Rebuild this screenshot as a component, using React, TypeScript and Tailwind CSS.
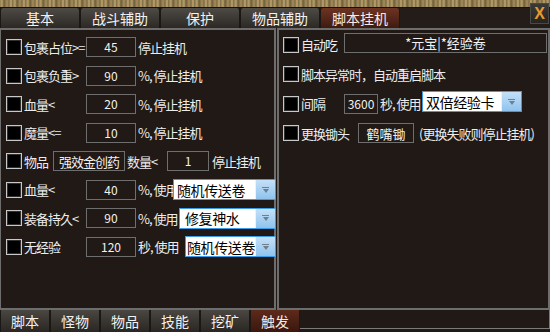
const font = "font-['Noto_Sans_CJK_SC','Liberation_Sans',sans-serif]";

function Check() {
  return <span className="block h-[16px] w-[16px] shrink-0 border border-[#c8c8c8] bg-black shadow-[inset_0_0_0_1px_#303030]" />;
}

function Box({ children, className = "" }: { children: React.ReactNode; className?: string }) {
  return (
    <span
      className={`flex h-[20px] shrink-0 items-center justify-center border border-[#6e6e6e] text-[12px] text-[#f2f2f2] ${className}`}
    >
      {children}
    </span>
  );
}

function Select({ value, className = "", pad = "pl-[3px]" }: { value: string; className?: string; pad?: string }) {
  return (
    <span className={`flex h-[21px] min-w-0 shrink-0 border border-[#3c9be6] bg-white ${className}`}>
      <span className={`flex min-w-0 flex-1 items-center overflow-hidden whitespace-nowrap text-[14px] leading-none tracking-[-0.4px] text-black ${pad}`}>
        {value}
      </span>
      <span className="flex w-[20px] shrink-0 flex-col items-center justify-center gap-[1px] border-l border-[#e8f3fc] bg-[linear-gradient(180deg,#c4e0f8,#8fc3ee)]">
        <span className="block h-[1px] w-[7px] bg-[#6f7f8c]" />
        <span className="block h-0 w-0 border-x-[3.5px] border-t-[4px] border-x-transparent border-t-[#6f7f8c]" />
      </span>
    </span>
  );
}

function Label({ children, className = "" }: { children: React.ReactNode; className?: string }) {
  return (
    <span className={`shrink-0 whitespace-pre text-[13px] leading-none tracking-[-1px] text-[#ececec] ${className}`}>{children}</span>
  );
}

function Row({ children }: { children: React.ReactNode }) {
  return <div className="flex h-[28.5px] items-center pl-[5px]">{children}</div>;
}

const topTabs = ["基本", "战斗辅助", "保护", "物品辅助", "脚本挂机"];
const bottomTabs = ["脚本", "怪物", "物品", "技能", "挖矿", "触发"];

export default function App() {
  return (
    <div className={`relative flex h-[332px] w-[550px] flex-col overflow-hidden bg-[#201915] ${font}`}>
      {/* gold strip */}
      <div className="h-[8px] shrink-0 border-b border-[#16110d] bg-[repeating-linear-gradient(90deg,#8f7c52_0px,#b8a06a_2px,#6e5c38_4px,#a48e5e_7px,#7e6a44_9px,#c0a872_11px,#75623c_13px)]" />
      {/* top tabs */}
      <div className="flex h-[20px] shrink-0 bg-[#231c18]">
        {topTabs.map((t, i) => (
          <div
            key={t}
            className={`flex w-[80px] items-center justify-center rounded-t-[3px] border-x border-[#1b1714] text-[14px] leading-none ${
              i === 4
                ? "bg-[linear-gradient(180deg,#6e3322,#3e1b11)] text-[#f4ece6]"
                : "bg-[linear-gradient(180deg,#4e4a45,#2c2824)] text-[#f2f2f2]"
            }`}
          >
            {t}
          </div>
        ))}
      </div>
      {/* close */}
      <div className="absolute right-[1px] top-[3px] flex h-[21px] w-[19px] items-center justify-center border border-[#4a4744] bg-[linear-gradient(180deg,#3c3a37,#262422)] font-['Liberation_Sans',sans-serif] text-[16px] font-bold leading-none text-[#e89a2c]">
        X
      </div>

      {/* panels */}
      <div className="flex h-[282px] shrink-0 gap-[1px]">
        <div className="flex w-[276px] flex-col border-2 border-l border-[#6d6d6d] pt-[3px]">
          <Row>
            <Check />
            <Label className="ml-[2px] w-[62px]">包裹占位&gt;=</Label>
            <Box className="w-[50px]">45</Box>
            <Label className="ml-[2px]">停止挂机</Label>
          </Row>
          <Row>
            <Check />
            <Label className="ml-[2px] w-[62px]">包裹负重&gt;</Label>
            <Box className="w-[50px]">90</Box>
            <Label className="ml-[2px]">%, 停止挂机</Label>
          </Row>
          <Row>
            <Check />
            <Label className="ml-[2px] w-[62px]">血量&lt;</Label>
            <Box className="w-[50px]">20</Box>
            <Label className="ml-[2px]">%, 停止挂机</Label>
          </Row>
          <Row>
            <Check />
            <Label className="ml-[2px] w-[62px]">魔量&lt;=</Label>
            <Box className="w-[50px]">10</Box>
            <Label className="ml-[2px]">%, 停止挂机</Label>
          </Row>
          <Row>
            <Check />
            <Label className="ml-[2px] w-[29px]">物品</Label>
            <Box className="w-[72px] text-[13px] tracking-[-1px]">强效金创药</Box>
            <Label className="ml-[2px] w-[40px]">数量&lt;</Label>
            <Box className="w-[42px]">1</Box>
            <Label className="ml-[3px]">停止挂机</Label>
          </Row>
          <Row>
            <Check />
            <Label className="ml-[2px] w-[62px]">血量&lt;</Label>
            <Box className="w-[50px]">40</Box>
            <Label className="ml-[2px] w-[35px]">%, 使用</Label>
            <Select value="随机传送卷" className="-mr-[2px] flex-1" />
          </Row>
          <Row>
            <Check />
            <Label className="ml-[2px] w-[62px]">装备持久&lt;</Label>
            <Box className="w-[50px]">90</Box>
            <Label className="ml-[2px] w-[41px]">%, 使用</Label>
            <Select value="修复神水" pad="pl-[5px]" className="-mr-[2px] flex-1" />
          </Row>
          <Row>
            <Check />
            <Label className="ml-[2px] w-[62px]">无经验</Label>
            <Box className="w-[50px]">120</Box>
            <Label className="ml-[2px] w-[47px]">秒, 使用</Label>
            <Select value="随机传送卷" pad="pl-[1px]" className="-mr-[2px] flex-1" />
          </Row>
        </div>

        <div className="flex flex-1 flex-col border-2 border-[#6d6d6d]">
          <div className="flex h-[29.5px] items-center pl-[4px]">
            <Check />
            <Label className="ml-[2px] w-[43px]">自动吃</Label>
            <Box className="-mt-[4px] w-[203px] text-[13px]">*元宝|*经验卷</Box>
          </div>
          <div className="flex h-[29.5px] items-center pl-[4px]">
            <Check />
            <Label className="ml-[2px]">脚本异常时，自动重启脚本</Label>
          </div>
          <div className="flex h-[29.5px] items-center pl-[4px]">
            <Check />
            <Label className="ml-[2px] w-[43px]">间隔</Label>
            <Box className="w-[34px]">3600</Box>
            <Label className="ml-[2px] w-[42px]">秒, 使用</Label>
            <Select value="双倍经验卡" className="-mt-[4px] w-[100px]" />
          </div>
          <div className="flex h-[29.5px] items-center pl-[4px]">
            <Check />
            <Label className="ml-[2px] w-[57px]">更换锄头</Label>
            <Box className="w-[56px] text-[13px]">鹤嘴锄</Box>
            <Label className="ml-[5px]">(更换失败则停止挂机)</Label>
          </div>
        </div>
      </div>

      {/* bottom tabs */}
      <div className="flex h-[22px] shrink-0">
        {bottomTabs.map((t, i) => (
          <div
            key={t}
            className={`flex w-[50px] items-center justify-center border-x border-[#1b1714] text-[14px] leading-none ${
              i === 5
                ? "bg-[linear-gradient(180deg,#5e2a1a,#3a1710)] text-[#f4ece6]"
                : "bg-[linear-gradient(180deg,#4a4641,#2a2623)] text-[#f2f2f2]"
            }`}
          >
            {t}
          </div>
        ))}
        <div className="mb-[3px] flex-1 border-b border-r border-[#7a7a7a]" />
      </div>
    </div>
  );
}
